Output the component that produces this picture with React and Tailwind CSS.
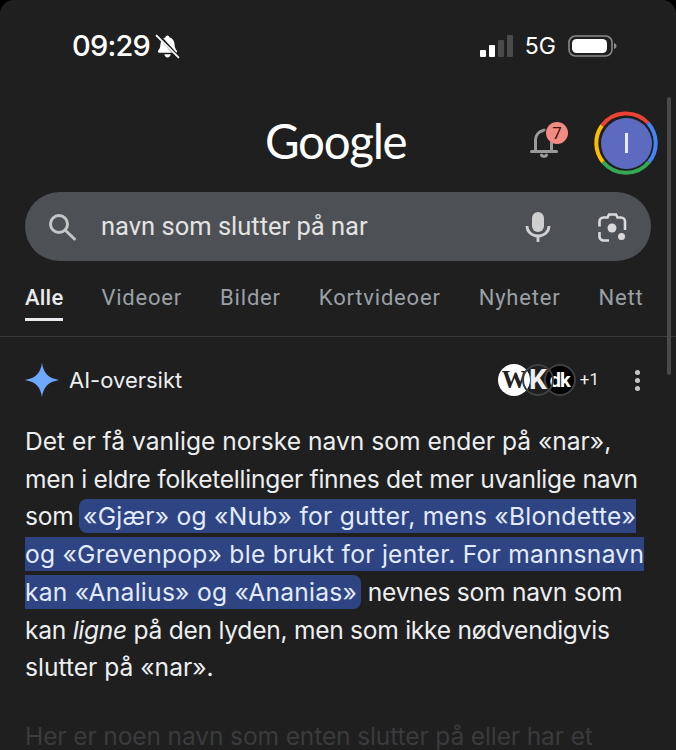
const tabs = ["Videoer", "Bilder", "Kortvideoer", "Nyheter", "Nett"];

function BellSlash() {
  return (
    <svg width="25" height="25" viewBox="0 0 24 24" className="ml-[5px]">
      <path fill="#fff" d="M12 1.500c1 0 1.700.7 1.800 1.600 3 .8 4.700 3.200 4.900 6.300.2 3 .7 5 2.300 6.700.6.700.2 1.900-.9 1.900H3.900c-1.100 0-1.500-1.200-.9-1.900 1.600-1.700 2.100-3.700 2.300-6.700.2-3.100 1.900-5.500 4.900-6.300.1-.9.800-1.600 1.800-1.600z" />
      <path fill="#fff" d="M9 19.500h6c-.2 1.700-1.400 3-3 3s-2.800-1.300-3-3z" />
      <path stroke="#1f1f1f" strokeWidth="3.200" d="M2.500.5l20 22" />
      <path stroke="#fff" strokeWidth="1.700" strokeLinecap="round" d="M1.500 1.500l21 21" />
    </svg>
  );
}

function Battery() {
  return (
    <svg width="49" height="24" viewBox="0 0 49 24">
      <rect x="1" y="2" width="43" height="20" rx="6.500" fill="none" stroke="#8a8a8a" strokeWidth="1.600" />
      <rect x="4" y="5" width="35" height="14" rx="4.500" fill="#fff" />
      <path d="M46 9c1.500.5 2.500 1.500 2.500 3s-1 2.500-2.500 3z" fill="#8a8a8a" />
    </svg>
  );
}

function NotificationBell() {
  return (
    <div className="relative w-[32px] h-[34px] mr-[32px] mb-[4px]">
      <svg width="30" height="34" viewBox="0 0 30 34" className="absolute left-0 top-0" fill="none" stroke="#9a9a9a" strokeWidth="3">
        <path d="M5.500 26V15c0-5 3.500-8.500 8-9.500" />
        <path d="M21.500 17v9" />
        <path d="M1.500 26.500h25" strokeLinecap="round" />
        <path d="M11.500 30c.5 1.800 4.500 1.800 5 0" strokeLinecap="round" />
        <circle cx="14" cy="5" r="1.500" fill="#9a9a9a" stroke="none" />
      </svg>
      <span className="absolute left-[16px] top-[-3px] w-[22px] h-[22px] rounded-full bg-[#f28b82] text-[#3a1512] text-[17px] leading-[22px] text-center">
        7
      </span>
    </div>
  );
}

function Avatar() {
  return (
    <div className="relative w-[64px] h-[64px] mb-[2px] shrink-0 rounded-full flex items-center justify-center">
      <svg width="64" height="64" viewBox="0 0 64 64" className="absolute inset-0" fill="none" strokeWidth="4">
        <path d="M8 14.500A30 30 0 0 1 54 12" stroke="#ea4335" />
        <path d="M54 12A30 30 0 0 1 55 51" stroke="#4285f4" />
        <path d="M55 51A30 30 0 0 1 9 51" stroke="#34a853" />
        <path d="M9 51A30 30 0 0 1 8 14.500" stroke="#fbbc04" />
      </svg>
      <div className="w-[51px] h-[51px] rounded-full bg-[#5c6bc0] flex items-center justify-center">
        <div className="w-[3px] h-[20px] bg-[#e8eaf6]" />
      </div>
    </div>
  );
}

function SearchIcon() {
  return (
    <svg width="30" height="30" viewBox="0 0 30 30" fill="none" stroke="#c4c7c5" strokeWidth="3">
      <circle cx="11" cy="12" r="8.500" />
      <path d="M17.500 18.500l9 8.500" strokeLinecap="round" />
    </svg>
  );
}

function MicIcon() {
  return (
    <svg width="26" height="32" viewBox="0 0 26 32" fill="none">
      <rect x="7" y="1" width="12" height="20" rx="6" fill="#cfcfcf" />
      <path d="M2 15c0 6 5 10 11 10s11-4 11-10" stroke="#cfcfcf" strokeWidth="2.800" />
      <path d="M13 25v6" stroke="#cfcfcf" strokeWidth="2.800" />
    </svg>
  );
}

function LensIcon() {
  return (
    <svg width="30" height="30" viewBox="0 0 30 30" fill="none" stroke="#dadada" strokeWidth="2.600">
      <path d="M12 28.500H6.500a4 4 0 0 1-4-4V20" />
      <path d="M2.500 14.500V9.500a4 4 0 0 1 4-4h4l1.500-3h7l1.500 3h3.500a4 4 0 0 1 4 4V18" />
      <circle cx="15" cy="16" r="4.500" fill="#dadada" stroke="none" />
      <circle cx="24.500" cy="24.500" r="3.500" fill="#dadada" stroke="none" />
    </svg>
  );
}

function Sparkle() {
  return (
    <svg width="34" height="34" viewBox="0 0 34 34">
      <path fill="#6fa8fb" d="M17 0C18.500 10 23 15 34 17 23 19 18.500 24 17 34 15.500 24 11 19 0 17 11 15 15.500 10 17 0z" />
    </svg>
  );
}

function Sources() {
  return (
    <div className="flex items-center font-['Liberation_Serif',serif] font-bold">
      <div className="w-[32px] h-[32px] rounded-full bg-white text-[#222] flex items-center justify-center text-[25px] tracking-[-1px]">W</div>
      <div className="w-[32px] h-[32px] -ml-[8px] rounded-full border-2 border-[#3c4043] text-[#eee] flex items-center justify-center text-[28px] z-[2] font-['Roboto',sans-serif]">K</div>
      <div className="w-[32px] h-[32px] -ml-[10px] rounded-full bg-black border-2 border-[#3c4043] text-white flex items-center justify-center text-[20px] tracking-[-1px] font-['Roboto',sans-serif]">dk</div>
    </div>
  );
}

export default function App() {
  return (
    <div className="h-[750px] overflow-hidden bg-black">
      <div className="relative h-full rounded-t-[14px] overflow-hidden bg-[#1f1f1f] text-[#eceef0] font-['Roboto',sans-serif]">
        {/* status bar */}
        <div className="flex items-center h-[30px] mt-[31px] pl-[72px] pr-[59px]">
          <span className="text-[29px] font-medium text-white font-['Inter',sans-serif] tracking-[-0.8px]">09:29</span>
          <BellSlash />
          <div className="flex items-end gap-[3px] ml-auto h-[22px]">
            <div className="w-[6px] h-[7px] rounded-[1px] bg-white" />
            <div className="w-[6px] h-[12px] rounded-[1px] bg-white" />
            <div className="w-[6px] h-[17px] rounded-[1px] bg-[#4a4a4a]" />
            <div className="w-[6px] h-[22px] rounded-[1px] bg-[#4a4a4a]" />
          </div>
          <span className="ml-[12px] mr-[12px] text-[23px] text-white font-['Inter',sans-serif]">5G</span>
          <Battery />
        </div>

        {/* logo row */}
        <div className="relative flex items-center justify-end h-[66px] mt-[50px] pr-[18px]">
          <span className="absolute left-[265px] top-[0px] text-[47.500px] leading-[60px] text-white font-['Lato',sans-serif] tracking-[-1.300px]">
            Google
          </span>
          <NotificationBell />
          <Avatar />
        </div>

        {/* search */}
        <div className="flex items-center h-[69px] mx-[25px] mt-[15px] pl-[23px] pr-[24px] rounded-full bg-[#4d5054]">
          <SearchIcon />
          <span className="ml-[23px] text-[25.500px] text-[#e3e3e3]">navn som slutter på nar</span>
          <div className="flex items-center gap-[46px] ml-auto">
            <MicIcon />
            <LensIcon />
          </div>
        </div>

        {/* tabs */}
        <div className="flex items-start gap-[38px] h-[76px] px-[25px] pt-[23px] border-b border-[#3a3a3a] text-[22px] tracking-[0.8px] text-[#9aa0a6]">
          <div className="flex flex-col">
            <span className="text-[#e8eaed] font-medium leading-[28px] tracking-[0.2px]">Alle</span>
            <div className="h-[3px] mt-[6px] bg-[#e8eaed]" />
          </div>
          {tabs.map((tab) => (
            <span key={tab} className="leading-[28px]">{tab}</span>
          ))}
        </div>

        {/* AI overview header */}
        <div className="flex items-center h-[34px] mt-[26px] pl-[25px] pr-[36px]">
          <Sparkle />
          <span className="ml-[10px] text-[22px] font-['Inter',sans-serif]">AI-oversikt</span>
          <div className="flex items-center ml-auto">
            <Sources />
            <span className="ml-[4px] text-[17px]">+1</span>
            <div className="flex flex-col gap-[3px] ml-[36px]">
              <div className="w-[5px] h-[5px] rounded-full bg-[#c4c7c5]" />
              <div className="w-[5px] h-[5px] rounded-full bg-[#c4c7c5]" />
              <div className="w-[5px] h-[5px] rounded-full bg-[#c4c7c5]" />
            </div>
          </div>
        </div>

        {/* answer */}
        <div className="font-['Inter',sans-serif] text-[24.600px] leading-[37.700px] tracking-[-0.28px] whitespace-nowrap">
          <p className="mt-[26px] px-[25px]">
            <span className="tracking-[0px]">Det er få vanlige norske navn som ender på «nar»,</span><br />
            men i eldre folketellinger finnes det mer uvanlige navn<br />
            som{" "}
            <span className="bg-[#2f4482] text-[#e2ebff] rounded-[8px] py-[2px] pl-[4px] pr-[4px] -ml-[1px] tracking-[0.26px]">
              «Gjær» og «Nub» for gutter, mens «Blondette»<br />
              og «Grevenpop» ble brukt for jenter. For mannsnavn<br />
              kan «Analius» og «Ananias»
            </span>{" "}
            nevnes som navn som<br />
            kan <i>ligne</i> på den lyden, men som ikke nødvendigvis<br />
            <span className="tracking-[0px]">slutter på «nar».</span>
          </p>
          <p className="mt-[31px] px-[25px] text-[#3a3b3c] tracking-[-0.15px]">
            Her er noen navn som enten slutter på eller har et
          </p>
        </div>

        {/* scrollbar */}
        <div className="absolute left-[667px] top-[97px] w-[4px] h-[278px] rounded-full bg-[#4a4a4a]" />
      </div>
    </div>
  );
}
